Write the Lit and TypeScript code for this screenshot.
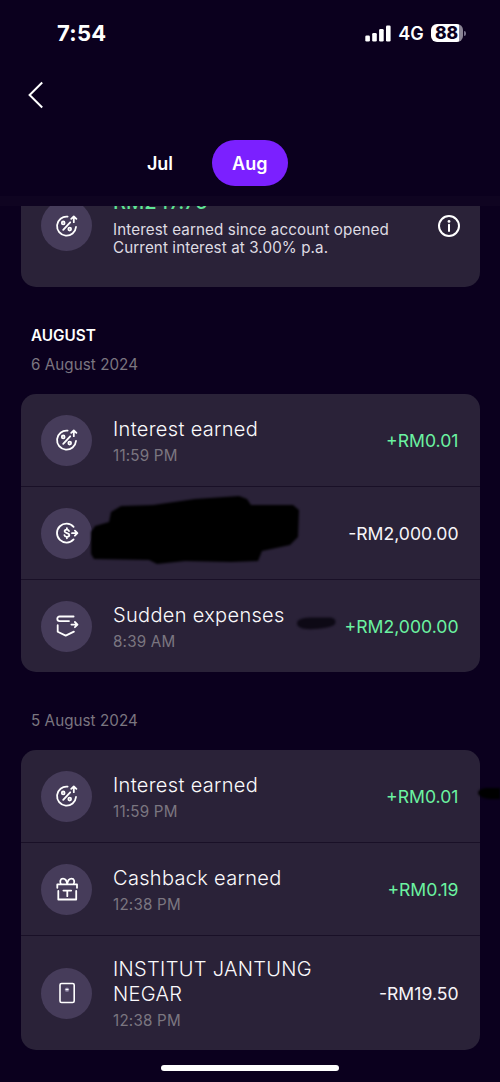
import { LitElement, html, svg, css, nothing } from 'lit';
import { customElement, property } from 'lit/decorators.js';

type IconName = 'interest' | 'transfer' | 'pocket' | 'gift' | 'card';

interface Entry {
  icon: IconName;
  title: string;
  time: string;
  amount: string;
  credit?: boolean;
  mark?: 'name' | 'dash' | 'edge';
}

const ICONS = {
  interest: svg`
    <path d="M12.6 2.7A9.5 9.5 0 1 0 21 13" />
    <path d="M18.8 8.2V3M16.2 4.9 18.8 2.5l2.6 2.4" />
    <path d="M8.2 15.9 15.2 8.3" />
    <circle cx="8.2" cy="8.9" r="1.4" /><circle cx="14.7" cy="15.1" r="1.4" />`,
  transfer: svg`
    <path d="M18.6 5.8A9.5 9.5 0 1 0 18.6 18.4" />
    <path d="M17 12.2H22.2M19.9 9.7 22.4 12.2l-2.5 2.5" />
    <path d="M14 10.1c-.3-1-1.1-1.5-2.2-1.5-1.3 0-2.2.6-2.2 1.7 0 2.4 4.7 1.3 4.7 3.7 0 1.1-1 1.8-2.4 1.8-1.3 0-2.3-.6-2.5-1.7M11.9 7.1v1.2M11.9 16v1.3" />`,
  pocket: svg`
    <path d="M18.6 2.5H4.6a2.3 2.3 0 0 0 0 4.6H14" />
    <path d="M2.7 11.2V17.8L10.7 21.6 18.9 17.6" />
    <path d="M16.4 10.6H22.4M19.9 8 22.5 10.6l-2.6 2.6" />`,
  gift: svg`
    <path d="M2.3 10.8V7.4H22V10.8" />
    <path d="M3.3 14V22.5H21.2V14" />
    <path d="M8.4 13.6H16.2M12.3 13.6V19.2" />
    <path d="M12.2 7.2C11.8 4 10.3 1.7 8 1.7 5.3 1.7 4.5 4.8 5.9 7.1M12.2 7.2C12.6 4 14.2 1.7 16.5 1.7c2.7 0 3.5 3.1 2.1 5.4" />`,
  card: svg`
    <rect x="5" y="2.5" width="14.2" height="19" rx="1.6" stroke-width="1.6" />
    <circle cx="12" cy="8.8" r="2.3" fill="#82799a" stroke="none" />
    <path d="M11.2 8.5h1.6" stroke-width="1.5" />`,
};

const MARKS = {
  name: html`<svg class="mark name" viewBox="0 0 220 76" width="220" height="76">
    <path d="M10 32 24 28 26 18 36 12 68 11 110 5 154 2 162 5 166 11 208 11 214 16 213 43 205 51 177 57 173 67 146 68 100 67 72 70 64 66 9 65 6 60 6 38Z" />
  </svg>`,
  dash: html`<svg class="mark dash" viewBox="0 0 50 24" width="50" height="24">
    <path d="M7 12Q7 7 20 6.500H41Q47 8 45 13Q42 17 24 18Q7 19 7 12Z" />
  </svg>`,
  edge: html`<svg class="mark edge" viewBox="0 0 26 20" width="26" height="20">
    <path d="M4 10Q4 6 12 5H28V16H16Q5 15 4 10Z" />
  </svg>`,
};

@customElement('round-icon')
export class RoundIcon extends LitElement {
  @property() name: IconName = 'interest';

  static styles = css`
    :host {
      display: flex;
      flex: none;
      align-items: center;
      justify-content: center;
      width: 51px;
      height: 51px;
      border-radius: 50%;
      background: #463c5a;
    }
    svg {
      display: block;
      fill: none;
      stroke: #fff;
      stroke-width: 1.8;
      stroke-linecap: round;
      stroke-linejoin: round;
    }
  `;

  render() {
    return html`<svg width="24" height="24" viewBox="0 0 24 24">${ICONS[this.name]}</svg>`;
  }
}

@customElement('entry-list')
export class EntryList extends LitElement {
  @property({ attribute: false }) entries: Entry[] = [];

  static styles = css`
    :host {
      display: block;
      margin: 0 20.5px;
      border-radius: 15px;
      background: #2a2238;
    }
    .row {
      position: relative;
      display: flex;
      align-items: center;
      box-sizing: border-box;
      min-height: 93px;
      padding: 20px 21px 20px 20.5px;
    }
    .row:first-child {
      min-height: 92px;
    }
    .row + .row {
      border-top: 1px solid #191027;
    }
    .text {
      flex: 1;
      margin-left: 21px;
      padding-top: 1px;
      margin-bottom: -1px;
    }
    .title {
      max-width: 220px;
      font-size: 20px;
      font-weight: 350;
      line-height: 25px;
      letter-spacing: 0.32px;
      color: #fbfafc;
    }
    .time {
      margin-top: 4px;
      font-size: 15.2px;
      font-weight: 400;
      line-height: 20px;
      letter-spacing: 0.2px;
      color: #7b7680;
    }
    .amount {
      padding-top: 1px;
      font-size: 17.6px;
      font-weight: 400;
      line-height: 24px;
      color: #f7f5f9;
    }
    .credit {
      color: #6bf3a1;
    }
    .mark {
      position: absolute;
      fill: #000;
      filter: blur(1.2px);
    }
    .name {
      left: 64px;
      top: 7px;
    }
    .dash {
      left: 269px;
      top: 31px;
      fill: #0d0915;
    }
    .edge {
      left: 453.5px;
      top: 33px;
    }
  `;

  render() {
    return this.entries.map(
      (e) => html`<div class="row">
        <round-icon name=${e.icon}></round-icon>
        <div class="text">
          ${e.title
            ? html`<div class="title">${e.title}</div>
                <div class="time">${e.time}</div>`
            : nothing}
        </div>
        <div class="amount ${e.credit ? 'credit' : ''}">${e.amount}</div>
        ${e.mark ? MARKS[e.mark] : nothing}
      </div>`
    );
  }
}

@customElement('app-root')
export class AppRoot extends LitElement {
  private sixth: Entry[] = [
    { icon: 'interest', title: 'Interest earned', time: '11:59 PM', amount: '+RM0.01', credit: true },
    { icon: 'transfer', title: '', time: '', amount: '-RM2,000.00', mark: 'name' },
    { icon: 'pocket', title: 'Sudden expenses', time: '8:39 AM', amount: '+RM2,000.00', credit: true, mark: 'dash' },
  ];

  private fifth: Entry[] = [
    { icon: 'interest', title: 'Interest earned', time: '11:59 PM', amount: '+RM0.01', credit: true, mark: 'edge' },
    { icon: 'gift', title: 'Cashback earned', time: '12:38 PM', amount: '+RM0.19', credit: true },
    { icon: 'card', title: 'INSTITUT JANTUNG NEGAR', time: '12:38 PM', amount: '-RM19.50' },
  ];

  static styles = css`
    :host {
      display: flex;
      flex-direction: column;
      box-sizing: border-box;
      width: 500px;
      height: 1082px;
      overflow: hidden;
      background: #0b001e;
      color: #fff;
      font-family: Inter, 'Liberation Sans', sans-serif;
      font-weight: 400;
    }
    .status {
      display: flex;
      align-items: center;
      height: 66px;
      padding: 0 34px 0 57px;
      box-sizing: border-box;
    }
    .clock {
      flex: 1;
      font-size: 22px;
      font-weight: 700;
      letter-spacing: 0.3px;
    }
    .bars {
      margin-right: 7px;
    }
    .net {
      margin-right: 7px;
      font-size: 18px;
      font-weight: 600;
      letter-spacing: 0.2px;
    }
    .battery {
      display: flex;
      align-items: center;
      gap: 1px;
    }
    .cell {
      width: 32px;
      height: 18px;
      border-radius: 6px;
      background: linear-gradient(90deg, #fff 88%, #8b8595 88%);
      color: #0b001e;
      font-size: 17.5px;
      font-weight: 800;
      line-height: 18px;
      text-indent: 4px;
    }
    .nub {
      width: 2px;
      height: 5px;
      border-radius: 0 2px 2px 0;
      background: #77708a;
    }
    .nav {
      height: 58px;
      padding: 15px 0 0 26px;
      box-sizing: border-box;
    }
    .nav svg {
      display: block;
    }
    .tabs {
      display: flex;
      height: 72px;
      padding: 16px 0 0 131px;
      box-sizing: border-box;
      gap: 22.5px;
      font-size: 18px;
      font-weight: 600;
      line-height: 47px;
      text-align: center;
    }
    .tab {
      width: 58px;
      height: 46px;
      border-radius: 23px;
    }
    .active {
      width: 76.5px;
      background: #7b20ff;
    }
    .shade {
      height: 10px;
      background: #0f0421;
    }
    .summary {
      height: 81px;
      flex: none;
      overflow: hidden;
      display: flex;
      align-items: flex-start;
      box-sizing: border-box;
      margin: 0 20.5px;
      padding: 0 19px 0 20.5px;
      border-radius: 0 0 15px 15px;
      background: #2a2238;
    }
    .summary round-icon {
      margin-top: -6px;
    }
    .info {
      flex: 1;
      margin: -16.5px 0 0 21px;
      font-size: 15.2px;
      line-height: 18.5px;
      color: #dedbe2;
    }
    .total {
      height: 31px;
      font-size: 20px;
      font-weight: 500;
      line-height: 25px;
      color: #5fe596;
    }
    .summary svg {
      margin-top: 8px;
    }
    h2 {
      margin: 38px 31px 0;
      font-size: 15.3px;
      line-height: 22px;
      font-weight: 600;
    }
    .date {
      margin: 8px 31px 19px;
      font-size: 15.2px;
      font-weight: 400;
      line-height: 20px;
      letter-spacing: 0.05px;
      color: #7b7680;
    }
    .later {
      margin-top: 39px;
    }
    .home {
      flex: none;
      width: 178px;
      height: 6.5px;
      margin: 14.5px 0 0 161px;
      border-radius: 4px;
      background: #fff;
    }
    .line {
      display: block;
      white-space: nowrap;
      letter-spacing: 0.1px;
    }
  `;

  render() {
    return html`
      <div class="status">
        <div class="clock">7:54</div>
        <svg class="bars" width="26" height="17" viewBox="0 0 26 17" fill="#fff">
          <rect x="0.3" y="10.5" width="4.6" height="6" rx="1.3" />
          <rect x="7.2" y="8" width="4.6" height="8.5" rx="1.3" />
          <rect x="14.1" y="4" width="4.6" height="12.5" rx="1.3" />
          <rect x="21" y="0.5" width="4.6" height="16" rx="1.3" />
        </svg>
        <div class="net">4G</div>
        <div class="battery">
          <div class="cell">88</div>
          <div class="nub"></div>
        </div>
      </div>
      <div class="nav">
        <svg width="20" height="28" viewBox="0 0 20 28" fill="none" stroke="#fff" stroke-width="2">
          <path d="M16.2 1.5 3.6 14 16.2 26.5" />
        </svg>
      </div>
      <div class="tabs">
        <div class="tab">Jul</div>
        <div class="tab active">Aug</div>
      </div>
      <div class="shade"></div>
      <div class="summary">
        <round-icon name="interest"></round-icon>
        <div class="info">
          <div class="total">RM247.75</div>
          <span class="line">Interest earned since account opened</span>
          <span class="line">Current interest at 3.00% p.a.</span>
        </div>
        <svg width="24" height="24" viewBox="0 0 24 24" fill="none" stroke="#fff" stroke-width="2">
          <circle cx="12" cy="12" r="10" />
          <path d="M12 10.8V17" stroke-linecap="round" />
          <circle cx="12" cy="7.4" r="1.4" fill="#fff" stroke="none" />
        </svg>
      </div>
      <h2>AUGUST</h2>
      <div class="date">6 August 2024</div>
      <entry-list .entries=${this.sixth}></entry-list>
      <div class="date later">5 August 2024</div>
      <entry-list .entries=${this.fifth}></entry-list>
      <div class="home"></div>
    `;
  }
}
